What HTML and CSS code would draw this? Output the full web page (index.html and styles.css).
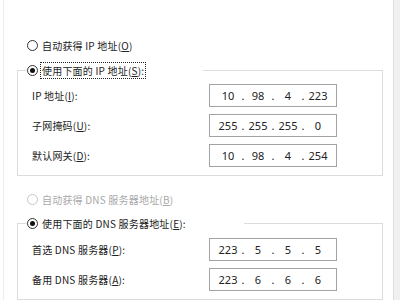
FILE: index.html
```html
<!DOCTYPE html>
<html lang="zh-CN">
<head>
  <meta charset="UTF-8">
  <title>Internet 协议版本 4 (TCP/IPv4) 属性</title>
  <link rel="stylesheet" href="styles.css">
</head>
<body>
  <div class="window">
    <div class="pane">
      <div class="option">
        <span class="radio"></span>
        <span class="caption">自动获得 IP 地址(<u>O</u>)</span>
      </div>

      <fieldset class="group">
        <legend class="legend-ip">
          <div class="option">
            <span class="radio checked"></span>
            <span class="caption focus">使用下面的 IP 地址(<u>S</u>):</span>
          </div>
        </legend>
        <div class="field">
          <label>IP 地址(<u>I</u>):</label>
          <div class="ip"><span>10</span><i>.</i><span>98</span><i>.</i><span>4</span><i>.</i><span>223</span></div>
        </div>
        <div class="field">
          <label>子网掩码(<u>U</u>):</label>
          <div class="ip"><span>255</span><i>.</i><span>255</span><i>.</i><span>255</span><i>.</i><span>0</span></div>
        </div>
        <div class="field">
          <label>默认网关(<u>D</u>):</label>
          <div class="ip"><span>10</span><i>.</i><span>98</span><i>.</i><span>4</span><i>.</i><span>254</span></div>
        </div>
      </fieldset>

      <div class="option disabled">
        <span class="radio"></span>
        <span class="caption">自动获得 DNS 服务器地址(<u>B</u>)</span>
      </div>

      <fieldset class="group group-dns">
        <legend class="legend-dns">
          <div class="option">
            <span class="radio checked"></span>
            <span class="caption">使用下面的 DNS 服务器地址(<u>E</u>):</span>
          </div>
        </legend>
        <div class="field">
          <label>首选 DNS 服务器(<u>P</u>):</label>
          <div class="ip"><span>223</span><i>.</i><span>5</span><i>.</i><span>5</span><i>.</i><span>5</span></div>
        </div>
        <div class="field">
          <label>备用 DNS 服务器(<u>A</u>):</label>
          <div class="ip"><span>223</span><i>.</i><span>6</span><i>.</i><span>6</span><i>.</i><span>6</span></div>
        </div>
      </fieldset>
    </div>
    <div class="scrollbar"></div>
  </div>
</body>
</html>
```

FILE: styles.css
```css
* { box-sizing: border-box; }
body {
  margin: 0;
  width: 400px;
  height: 300px;
  overflow: hidden;
  background: #fff;
  font-family: "Noto Sans CJK SC", "Noto Sans", sans-serif;
  font-size: 10px;
  color: #222;
}
.window {
  display: flex;
  height: 300px;
}
.pane {
  flex: 0 0 390px;
  margin-left: 3px;
  border-left: 1px solid #ececec;
  padding: 36px 10px 0 13px;
}
.scrollbar {
  flex: 1;
  background: #f0f0f0;
  border-left: 1px solid #dedede;
}

.option {
  display: flex;
  align-items: center;
  height: 18px;
  padding-left: 10px;
}
.radio {
  flex: none;
  display: flex;
  align-items: center;
  justify-content: center;
  width: 11px;
  height: 11px;
  border: 1px solid #333;
  border-radius: 50%;
  background: #fff;
}
.radio.checked::after {
  content: "";
  width: 5px;
  height: 5px;
  border-radius: 50%;
  background: #111;
}
.caption {
  margin-left: 2px;
  padding: 0 1px;
  border: 1px dotted transparent;
  line-height: 15px;
  white-space: nowrap;
  letter-spacing: 0.2px;
}
.caption.focus { border-color: #222; }
.disabled { margin-top: 14px; color: #a8a8a8; }
.disabled .radio { border-color: #c6c6c6; }

.group {
  margin: 7px 0 0;
  padding: 5px 0 8px;
  border: 1px solid #dcdcdc;
  min-width: 0;
}
.group-dns { margin-top: 6px; padding-top: 6px; }
legend {
  padding: 0;
  margin-left: 9px;
}
legend .option { padding-left: 0; }
.legend-ip { width: 176px; }
.legend-dns { width: 217px; }

.field {
  display: grid;
  grid-template-columns: 177px 128px;
  align-items: center;
  height: 23px;
  margin-left: 14px;
}
.field + .field { margin-top: 7px; }
.field label { white-space: nowrap; letter-spacing: 0.2px; }

.ip {
  display: flex;
  align-items: center;
  height: 23px;
  padding-left: 4px;
  border: 1px solid #a3a3a3;
  font-family: "Noto Sans", sans-serif;
  font-size: 11px;
  color: #222;
}
.ip span {
  width: 28px;
  text-align: center;
}
.ip i {
  display: flex;
  justify-content: center;
  width: 2px;
  font-style: normal;
}
```
